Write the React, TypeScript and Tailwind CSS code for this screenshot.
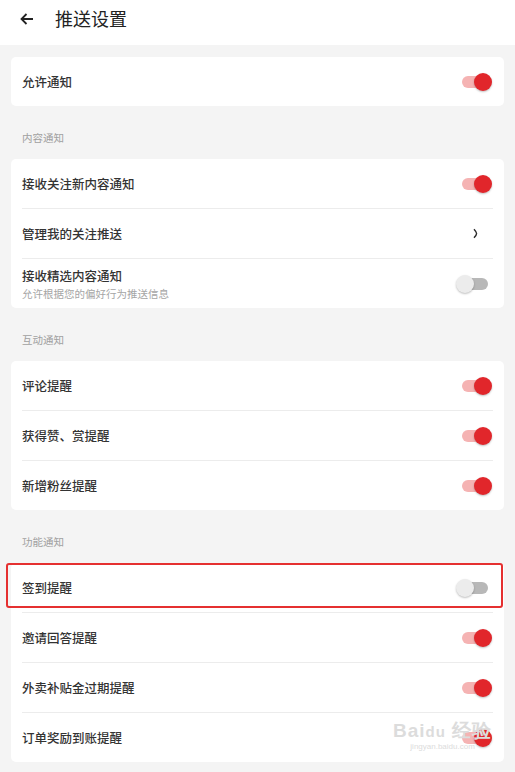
import React from 'react';

type Row = { title: string; sub?: string; kind: 'on' | 'off' | 'arrow'; marked?: boolean };

const sections: { label?: string; rows: Row[] }[] = [
    { rows: [{ title: '允许通知', kind: 'on' }] },
    {
        label: '内容通知',
        rows: [
            { title: '接收关注新内容通知', kind: 'on' },
            { title: '管理我的关注推送', kind: 'arrow' },
            { title: '接收精选内容通知', sub: '允许根据您的偏好行为推送信息', kind: 'off' },
        ],
    },
    {
        label: '互动通知',
        rows: [
            { title: '评论提醒', kind: 'on' },
            { title: '获得赞、赏提醒', kind: 'on' },
            { title: '新增粉丝提醒', kind: 'on' },
        ],
    },
    {
        label: '功能通知',
        rows: [
            { title: '签到提醒', kind: 'off', marked: true },
            { title: '邀请回答提醒', kind: 'on' },
            { title: '外卖补贴金过期提醒', kind: 'on' },
            { title: '订单奖励到账提醒', kind: 'on' },
        ],
    },
];

const Toggle = ({ on }: { on: boolean }) => (
    <div className="relative w-[37px] h-[18px]">
        <div className={`absolute left-[6px] top-[3px] w-[26px] h-[12px] rounded-full ${on ? 'bg-[#f5b3b3]' : 'bg-[#b8b8b8]'}`} />
        <div
            className={`absolute top-0 w-[18px] h-[18px] rounded-full shadow-[0_1px_2px_rgba(0,0,0,0.25)] ${on ? 'left-[18px] bg-[#e1262b]' : 'left-0 bg-[#ececec]'}`}
        />
    </div>
);

const SettingRow = ({ row }: { row: Row }) => (
    <div className="relative">
        <div className="h-[49px] px-[11px] flex items-center justify-between">
            <div className="flex flex-col">
                <span className="text-[12.5px] leading-[16px] font-medium text-[#333]">{row.title}</span>
                {row.sub && <span className="mt-[3px] text-[10.5px] leading-[13px] text-[#a5a5a5]">{row.sub}</span>}
            </div>
            {row.kind === 'arrow' ? (
                <svg width="5" height="11" viewBox="0 0 5 11" className="mr-[15px]">
                    <path d="M1 1.2Q3.6 4 3.6 5.5Q3.6 7 1 9.8" fill="none" stroke="#2a2a2a" strokeWidth="1.4" />
                </svg>
            ) : (
                <Toggle on={row.kind === 'on'} />
            )}
        </div>
        {row.marked && (
            <div className="absolute -left-[5px] w-[497px] top-0 h-[45px] border-2 border-[#e53030] rounded-[3px]" />
        )}
    </div>
);

const App = () => {
    return (
        <div
            className="relative w-[515px] h-[772px] bg-[#f4f4f4] overflow-hidden"
            style={{ fontFamily: '"Noto Sans CJK SC", "Noto Sans", sans-serif' }}
        >
            <div className="h-[45px] bg-white flex items-center">
                <svg width="14" height="12" viewBox="0 0 14 12" className="ml-[20px] mt-[-8px]">
                    <path d="M13 6H1.5M6.5 1L1.5 6l5 5" fill="none" stroke="#222" strokeWidth="1.8" />
                </svg>
                <span className="ml-[21px] mt-[-9px] text-[18px] text-[#222]">推送设置</span>
            </div>
            <div className="px-[11px] pt-[12px]">
                {sections.map((s, i) => (
                    <div key={i}>
                        {s.label && (
                            <div className="pt-[24px] pb-[13px] px-[11px] text-[10.5px] leading-[16px] text-[#a0a0a0]">{s.label}</div>
                        )}
                        <div className="bg-white rounded-[5px]">
                            {s.rows.map((r, j) => (
                                <div key={j}>
                                    {j > 0 && <div className="mx-[11px] h-px bg-[#ececec]" />}
                                    <SettingRow row={r} />
                                </div>
                            ))}
                        </div>
                    </div>
                ))}
            </div>
            <div className="absolute left-[393px] top-[721px] flex flex-col items-center text-[#dcdcdc] pointer-events-none">
                <span className="text-[19px] leading-[20px] font-bold tracking-[1px]" style={{ fontFamily: '"Liberation Sans", sans-serif' }}>
                    Bai<span className="text-[15px]">du</span> 经验
                </span>
                <span className="text-[8px] leading-[10px]" style={{ fontFamily: '"Liberation Sans", sans-serif' }}>jingyan.baidu.com</span>
            </div>
        </div>
    );
};

export default App;
